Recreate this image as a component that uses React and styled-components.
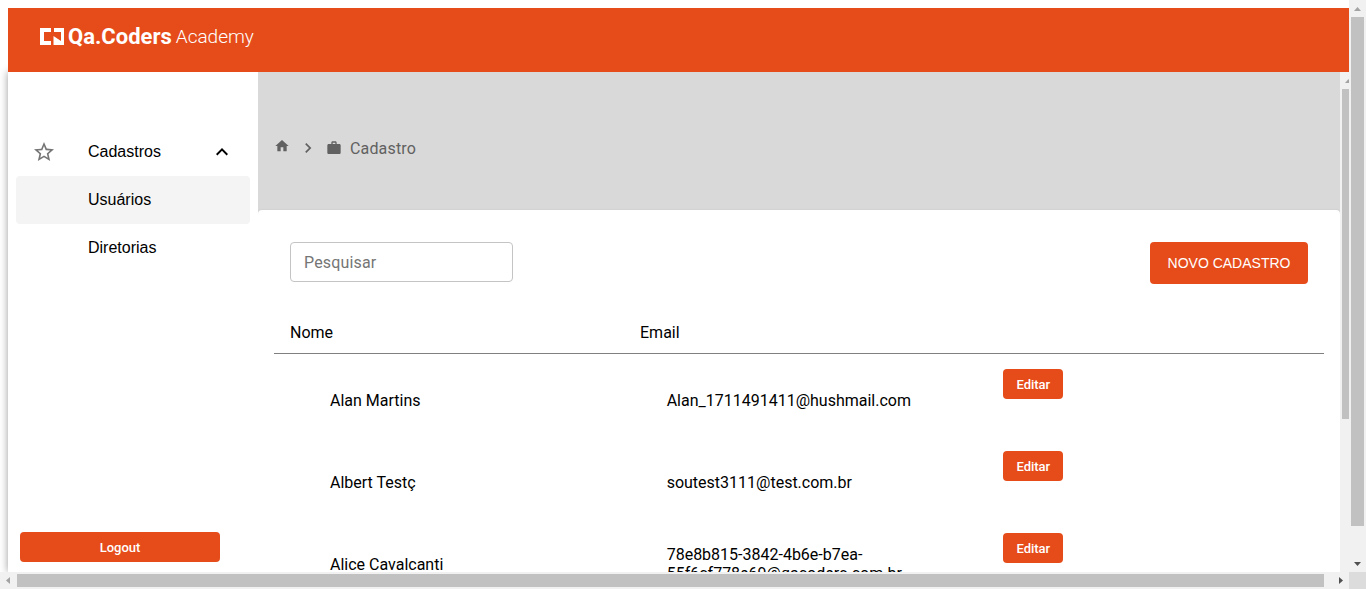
import React from "react";
import styled, { createGlobalStyle } from "styled-components";

const ORANGE = "#e64c1a";
const ARIAL = '"Liberation Sans", Arial, sans-serif';
const ROBOTO = 'Roboto, "Liberation Sans", sans-serif';

const GlobalStyle = createGlobalStyle`
  *, *::before, *::after { box-sizing: border-box; }
  body { margin: 0; background: #fff; color: #000; font: 16px/19px ${ROBOTO}; overflow: hidden; }
`;

const Frame = styled.div`
  display: grid;
  grid-template-columns: minmax(0, 1fr) 17px;
  grid-template-rows: minmax(0, 1fr) 17px;
  height: 100vh;
`;

const Viewport = styled.div`
  display: flex;
  flex-direction: column;
  overflow: hidden;
  padding: 8px 0 0 8px;
`;

const Header = styled.header`
  flex: none;
  display: flex;
  align-items: center;
  height: 64px;
  padding: 0 32px 6px;
  background: ${ORANGE};
  position: relative;
`;

const Logo = styled.a`
  display: flex;
  align-items: center;
  gap: 4px;
  color: #fff;
  text-decoration: none;
  line-height: 24px;
`;

const LogoStrong = styled.span`
  font-size: 22px;
  font-weight: 700;
`;

const LogoLight = styled.span`
  font-size: 19px;
  font-weight: 300;
`;

const Body = styled.div`
  flex: 1;
  min-height: 0;
  display: flex;
  margin-right: -8px;
`;

const Sidebar = styled.aside`
  flex: none;
  display: flex;
  flex-direction: column;
  width: 250px;
  padding: 56px 8px 10px;
  background: #fff;
  box-shadow: 0 0 8px rgba(0, 0, 0, 0.4);
  font-family: ${ARIAL};
`;

const Menu = styled.nav`
  display: flex;
  flex-direction: column;
`;

const menuItem = `
  display: grid;
  grid-template-columns: 56px 1fr 24px;
  align-items: center;
  height: 48px;
  padding: 0 16px;
  border: 0;
  border-radius: 4px;
  color: #000;
  font: 16px ${ARIAL};
  text-align: left;
  text-decoration: none;
`;

const MenuToggle = styled.button`
  ${menuItem}
  background: none;
`;

const MenuLink = styled.a`
  ${menuItem}
  background: ${(p) => (p.$active ? "#f4f4f4" : "none")};
  span { grid-column: 2; }
`;

const Icon = styled.svg`
  display: block;
  width: ${(p) => p.$size}px;
  height: ${(p) => p.$size}px;
  fill: ${(p) => p.$color || "currentColor"};
`;

const Button = styled.button`
  height: 30px;
  padding: 0 12px;
  border: 0;
  border-radius: 4px;
  background: ${ORANGE};
  color: #fff;
  font: 500 13px ${ROBOTO};
`;

const EditButton = styled(Button)`
  width: 60px;
`;

const LogoutButton = styled(Button)`
  width: 200px;
  margin: auto 0 0 4px;
`;

const NewButton = styled(Button)`
  width: 158px;
  height: 42px;
  font: 14px ${ARIAL};
`;

const Main = styled.main`
  flex: 1;
  min-width: 0;
  overflow: hidden;
  background: #d9d9d9;
  position: relative;
`;

const Breadcrumb = styled.nav`
  display: flex;
  align-items: center;
  height: 138px;
  padding: 14px 16px 0;
  color: #616161;
`;

const Crumb = styled.a`
  display: flex;
  align-items: center;
  gap: 8px;
  color: inherit;
  text-decoration: none;
  letter-spacing: 0.01em;
`;

const HomeCrumb = styled(Crumb)`
  padding-bottom: 4px;
`;

const Separator = styled.span`
  margin: 0 8px;
`;

const Panel = styled.section`
  min-height: 100%;
  border-radius: 4px 4px 0 0;
  background: #fff;
  box-shadow: 0 0 2px rgba(0, 0, 0, 0.1);
  padding: 32px 16px;
`;

const Toolbar = styled.div`
  display: flex;
  justify-content: space-between;
  align-items: flex-start;
  padding: 0 16px;
`;

const Search = styled.input`
  width: 223px;
  height: 40px;
  padding: 0 13px;
  border: 1px solid #c4c4c4;
  border-radius: 4px;
  font: 16px ${ROBOTO};
  letter-spacing: 0.01em;
  &::placeholder { color: #757575; opacity: 1; }
`;

const Table = styled.table`
  display: block;
  margin-top: 28px;
`;

const THead = styled.thead`
  display: block;
  border-bottom: 1px solid #808080;
`;

const TBody = styled.tbody`
  display: block;
  padding: 5px 24px 0 16px;
`;

const Row = styled.tr`
  display: grid;
  grid-template-columns: repeat(3, minmax(0, 1fr));
`;

const Th = styled.th`
  height: 41px;
  padding: 11px 16px;
  font-weight: 400;
  text-align: left;
`;

const Td = styled.td`
  display: flex;
  align-items: ${(p) => (p.$top ? "flex-start" : "center")};
  height: 82px;
  padding: 10px 0 10px 40px;
`;

const Track = styled.div`
  flex: none;
  display: flex;
  flex-direction: ${(p) => (p.$horizontal ? "row" : "column")};
  ${(p) => (p.$horizontal ? "height" : "width")}: 17px;
  padding: ${(p) => (p.$horizontal ? "2px 0" : "0 2px")};
  background: #f1f1f1;
`;

const Arrow = styled.svg`
  flex: none;
  width: ${(p) => (p.$horizontal ? 17 : 13)}px;
  height: ${(p) => (p.$horizontal ? 13 : 17)}px;
`;

const Thumb = styled.div`
  flex: ${(p) => p.$share} 1 0;
  background: #c1c1c1;
`;

const Rest = styled.div`
  flex: ${(p) => p.$share} 1 0;
`;

const Corner = styled.div`
  background: #dcdcdc;
`;

function Scrollbar({ horizontal, thumb, rest, openEnded }) {
  const viewBox = horizontal ? "0 0 17 13" : "0 0 13 17";
  return (
    <Track $horizontal={horizontal} aria-hidden="true">
      <Arrow $horizontal={horizontal} viewBox={viewBox}>
        <path d={horizontal ? "M10 3v7L6 6.500z" : "M3 11h7L6.500 7z"} fill="#a3a3a3" />
      </Arrow>
      <Thumb $share={thumb} />
      <Rest $share={rest} />
      {!openEnded && (
        <Arrow $horizontal={horizontal} viewBox={viewBox}>
          <path d={horizontal ? "M7 3v7l4-3.500z" : "M3 7h7L6.500 11z"} fill="#505050" />
        </Arrow>
      )}
    </Track>
  );
}

const users = [
  { name: "Alan Martins", email: "Alan_1711491411@hushmail.com" },
  { name: "Albert Testç", email: "soutest3111@test.com.br" },
  { name: "Alice Cavalcanti", email: "78e8b815-3842-4b6e-b7ea-55f6cf778e69@qacoders.com.br" },
];

export default function App() {
  return (
    <Frame>
      <GlobalStyle />
      <Viewport>
        <Header>
          <Logo href="#" aria-label="Qa.Coders Academy">
            <svg width="24" height="18" viewBox="0 0 24 18" fill="#fff" aria-hidden="true">
              <path d="M0 0h11v4H4v9h7v4H0z" />
              <path d="M14 0h10.500v17H13.500V8l7.500 5V4h-7z" />
            </svg>
            <LogoStrong>Qa.Coders</LogoStrong>
            <LogoLight>Academy</LogoLight>
          </Logo>
        </Header>
        <Body>
          <Sidebar>
            <Menu>
              <MenuToggle type="button" aria-expanded="true">
                <Icon $size={24} $color="#757575" viewBox="0 0 24 24">
                  <path d="m22 9.240-7.190-.62L12 2 9.190 8.630 2 9.240l5.460 4.730L5.820 21 12 17.270 18.180 21l-1.630-7.030L22 9.240zM12 15.400l-3.760 2.270 1-4.280-3.320-2.880 4.380-.38L12 6.100l1.710 4.040 4.380.38-3.320 2.880 1 4.280L12 15.400z" />
                </Icon>
                <span>Cadastros</span>
                <Icon $size={24} viewBox="0 0 24 24">
                  <path d="m12 8-6 6 1.410 1.410L12 10.830l4.590 4.580L18 14z" />
                </Icon>
              </MenuToggle>
              <MenuLink href="#usuarios" $active><span>Usuários</span></MenuLink>
              <MenuLink href="#diretorias"><span>Diretorias</span></MenuLink>
            </Menu>
            <LogoutButton type="button">Logout</LogoutButton>
          </Sidebar>
          <Main>
            <Breadcrumb aria-label="Navegação">
              <HomeCrumb href="#" aria-label="Início">
                <Icon $size={16} viewBox="0 0 24 24">
                  <path d="M10 20v-6h4v6h5v-8h3L12 3 2 12h3v8z" />
                </Icon>
              </HomeCrumb>
              <Separator aria-hidden="true">
                <Icon $size={20} viewBox="0 0 24 24">
                  <path d="M10 6 8.590 7.410 13.170 12l-4.580 4.590L10 18l6-6z" />
                </Icon>
              </Separator>
              <Crumb href="#cadastro">
                <Icon $size={16} viewBox="0 0 24 24">
                  <path d="M20 6h-4V4c0-1.110-.89-2-2-2h-4c-1.110 0-2 .89-2 2v2H4c-1.110 0-1.990.89-1.990 2L2 19c0 1.110.89 2 2 2h16c1.110 0 2-.89 2-2V8c0-1.110-.89-2-2-2zm-6 0h-4V4h4v2z" />
                </Icon>
                Cadastro
              </Crumb>
            </Breadcrumb>
            <Panel>
              <Toolbar>
                <Search type="search" placeholder="Pesquisar" aria-label="Pesquisar" />
                <NewButton type="button">NOVO CADASTRO</NewButton>
              </Toolbar>
              <Table>
                <THead>
                  <Row>
                    <Th scope="col">Nome</Th>
                    <Th scope="col">Email</Th>
                    <Th as="td" />
                  </Row>
                </THead>
                <TBody>
                  {users.map((user) => (
                    <Row key={user.name}>
                      <Td>{user.name}</Td>
                      <Td>{user.email}</Td>
                      <Td $top><EditButton type="button">Editar</EditButton></Td>
                    </Row>
                  ))}
                </TBody>
              </Table>
            </Panel>
          </Main>
          <Scrollbar thumb={330} rest={153} openEnded />
        </Body>
      </Viewport>
      <Scrollbar thumb={509} rest={29} />
      <Scrollbar horizontal thumb={1307} rest={8} />
      <Corner />
    </Frame>
  );
}
